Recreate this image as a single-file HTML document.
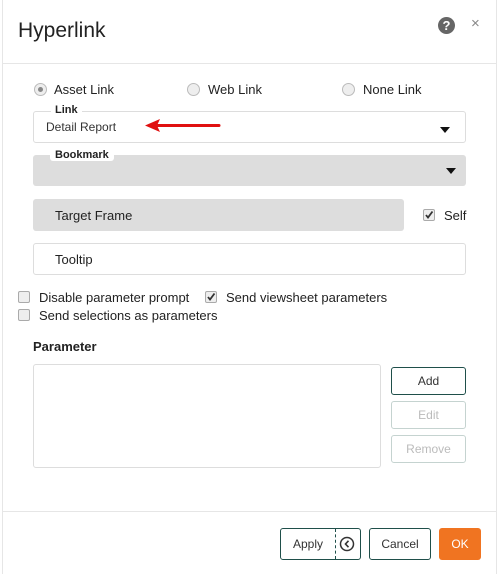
<!DOCTYPE html>
<html><head><style>
*{margin:0;padding:0;box-sizing:border-box}
body{width:499px;height:574px;background:#fff;font-family:"Liberation Sans",sans-serif;color:#222;position:relative;overflow:hidden}
.a{position:absolute}
.t{font-size:13px;color:#222;white-space:nowrap}
.rad{width:13px;height:13px;border-radius:50%;border:1px solid #bbb;background:#eee}
.cb{width:12px;height:12px;border:1px solid #aaa;border-radius:2px;background:#eee}
.box{border:1px solid #ddd;border-radius:3px}
.gray{background:#ddd;border-radius:3px}
.lbl{font-size:11px;font-weight:bold;background:#fff;padding:0 4px;color:#222}
.caret{width:0;height:0;border-left:5px solid transparent;border-right:5px solid transparent;border-top:6px solid #111}
.btn{border:1px solid #1f4f4a;border-radius:3px;font-size:12px;text-align:center;color:#333}
.dis{border-color:#c5d3d0;color:#bbb}
</style></head><body>
<div class="a" style="left:2px;top:0;width:1px;height:574px;background:#e6e6e6"></div>
<div class="a" style="left:496px;top:0;width:1px;height:574px;background:#e6e6e6"></div>
<div class="a" style="left:18px;top:19px;font-size:21px;color:#222">Hyperlink</div>
<div class="a" style="left:438px;top:17px;width:17px;height:17px;border-radius:50%;background:#666;color:#fff;font-size:13px;font-weight:bold;text-align:center;line-height:17px">?</div>
<div class="a" style="left:471px;top:15px;font-size:15px;color:#888">×</div>
<div class="a" style="left:3px;top:63px;width:493px;height:1px;background:#e6e6e6"></div>

<div class="a rad" style="left:34px;top:83px"></div><div class="a" style="left:38px;top:87px;width:5px;height:5px;border-radius:50%;background:#888"></div>
<div class="a t" style="left:54px;top:82px">Asset Link</div>
<div class="a rad" style="left:187px;top:83px"></div>
<div class="a t" style="left:208px;top:82px">Web Link</div>
<div class="a rad" style="left:342px;top:83px"></div>
<div class="a t" style="left:363px;top:82px">None Link</div>

<div class="a box" style="left:33px;top:111px;width:433px;height:32px"></div>
<div class="a lbl" style="left:51px;top:104px">Link</div>
<div class="a" style="left:46px;top:120px;font-size:12px;color:#333">Detail Report</div>
<div class="a caret" style="left:440px;top:127px"></div>
<svg class="a" style="left:143px;top:117px" width="80" height="18"><path d="M12 8.5 L76 8.5" stroke="#e01010" stroke-width="3" stroke-linecap="round"/><path d="M2 8.5 L17 2 L14 8.5 L17 15 Z" fill="#e01010"/></svg>

<div class="a gray" style="left:33px;top:155px;width:433px;height:31px"></div>
<div class="a lbl" style="left:50px;top:149px;border-radius:3px;padding:0 5px">Bookmark</div>
<div class="a caret" style="left:446px;top:168px"></div>

<div class="a gray" style="left:33px;top:199px;width:371px;height:32px"></div>
<div class="a t" style="left:55px;top:208px">Target Frame</div>
<div class="a cb" style="left:423px;top:209px"></div>
<svg class="a" style="left:423px;top:209px" width="12" height="12"><path d="M3 6 L5 8.5 L9.5 2.5" stroke="#333" stroke-width="1.8" fill="none"/></svg>
<div class="a t" style="left:444px;top:208px">Self</div>

<div class="a box" style="left:33px;top:243px;width:433px;height:32px"></div>
<div class="a t" style="left:55px;top:252px">Tooltip</div>

<div class="a cb" style="left:18px;top:291px"></div>
<div class="a t" style="left:39px;top:290px">Disable parameter prompt</div>
<div class="a cb" style="left:205px;top:291px"></div>
<svg class="a" style="left:205px;top:291px" width="12" height="12"><path d="M3 6 L5 8.5 L9.5 2.5" stroke="#333" stroke-width="1.8" fill="none"/></svg>
<div class="a t" style="left:226px;top:290px">Send viewsheet parameters</div>
<div class="a cb" style="left:18px;top:309px"></div>
<div class="a t" style="left:39px;top:308px">Send selections as parameters</div>

<div class="a" style="left:33px;top:339px;font-size:13px;font-weight:bold">Parameter</div>
<div class="a box" style="left:33px;top:364px;width:348px;height:104px"></div>
<div class="a btn" style="left:391px;top:367px;width:75px;height:28px;line-height:26px">Add</div>
<div class="a btn dis" style="left:391px;top:401px;width:75px;height:28px;line-height:26px">Edit</div>
<div class="a btn dis" style="left:391px;top:435px;width:75px;height:28px;line-height:26px">Remove</div>

<div class="a" style="left:3px;top:511px;width:493px;height:1px;background:#e6e6e6"></div>
<div class="a btn" style="left:280px;top:528px;width:81px;height:32px;line-height:30px"><span style="position:absolute;left:12px">Apply</span></div>
<div class="a" style="left:335px;top:529px;height:30px;border-left:1px dashed #1f4f4a"></div>
<svg class="a" style="left:339px;top:536px" width="16" height="16"><circle cx="8" cy="8" r="6.5" stroke="#333" stroke-width="1.5" fill="none"/><path d="M9.5 4.8 L6.5 8 L9.5 11.2" stroke="#333" stroke-width="1.6" fill="none"/></svg>
<div class="a btn" style="left:369px;top:528px;width:62px;height:32px;line-height:30px">Cancel</div>
<div class="a" style="left:439px;top:528px;width:42px;height:32px;background:#f07421;border-radius:3px;color:#fff;font-size:12px;text-align:center;line-height:32px">OK</div>
</body></html>
